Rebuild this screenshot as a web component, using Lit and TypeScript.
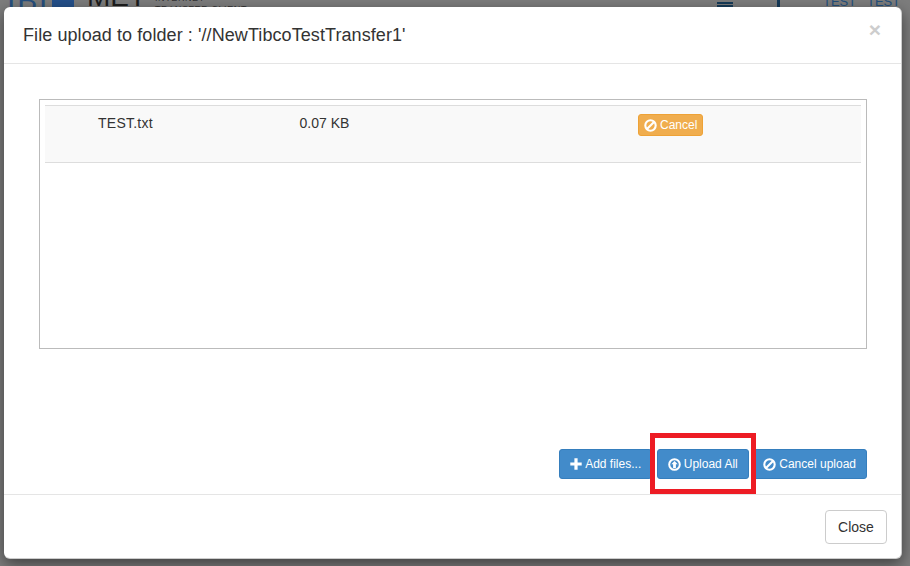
import { LitElement, html, css, svg } from "lit";
import { customElement } from "lit/decorators.js";

const ban = svg`<svg class="ic" viewBox="0 0 13 13" width="13" height="13"><circle cx="6.5" cy="6.5" r="5.2" fill="none" stroke="#fff" stroke-width="2.1"/><path d="M3 10 10 3" stroke="#fff" stroke-width="2.1"/></svg>`;
const plus = svg`<svg class="ic" viewBox="0 0 12 12" width="12" height="12"><path d="M4.4 .3h3.2v4.1h4.1v3.2H7.6v4.1H4.4V7.6H.3V4.4h4.1z" fill="#fff"/></svg>`;
const up = svg`<svg class="ic" viewBox="0 0 13 13" width="13" height="13"><circle cx="6.5" cy="6.5" r="5.3" fill="none" stroke="#fff" stroke-width="2"/><path d="M6.5 2.9 9.7 6.3H7.9V10H5.1V6.3H3.3z" fill="#fff"/></svg>`;

@customElement("app-root")
export class AppRoot extends LitElement {
  static styles = css`
    :host {
      display: block;
      position: relative;
      width: 910px;
      height: 566px;
      overflow: hidden;
      background: #7d7d7d;
      font-family: "Liberation Sans", Arial, sans-serif;
      color: #333;
    }
    .under {
      display: flex;
      align-items: flex-start;
      height: 8px;
      overflow: hidden;
    }
    .under > * { flex: none; display: block; white-space: nowrap; line-height: 1; }
    .ibi { margin: -14px 0 0 7px; width: 45px; font-size: 30px; letter-spacing: 2px; color: #264f7e; }
    .logo { width: 22px; height: 8px; background: #24508a; }
    .met { margin: -17px 0 0 13px; width: 68px; font-size: 28px; color: #1d1d1d; }
    .small { margin-top: -7px; width: 562px; font-size: 9px; line-height: 11px; color: #333; letter-spacing: 0.6px; }
    .small b { display: block; font-weight: 400; }
    .list { margin-top: 2px; width: 16px; height: 6px; background: repeating-linear-gradient(#163a58 0 2px, transparent 2px 3px); }
    .bar { margin-left: 44px; width: 3px; height: 8px; background: #163a58; }
    .tests { margin: -5px 0 0 43px; width: 44px; font-size: 13px; color: #23507e; }
    .tests.b { margin-left: 0; }
    .modal {
      position: absolute;
      left: 4px;
      top: 7px;
      width: 898px;
      height: 552px;
      box-sizing: border-box;
      display: flex;
      flex-direction: column;
      background: #fff;
      border: 1px solid rgba(0, 0, 0, 0.2);
      border-top: 0;
      border-left: 0;
      border-radius: 6px;
      box-shadow: 0 5px 15px rgba(0, 0, 0, 0.5);
    }
    header {
      display: flex;
      justify-content: space-between;
      box-sizing: border-box;
      height: 57px;
      padding: 15px 20px 0 19px;
      border-bottom: 1px solid #e5e5e5;
    }
    h4 { margin: 0; font-size: 18px; font-weight: 500; line-height: 26px; letter-spacing: 0.08px; color: #333; }
    .x { font-size: 21px; font-weight: 700; line-height: 15px; color: #cdcdcd; }
    .body {
      flex: 1;
      display: flex;
      flex-direction: column;
      padding: 35px 34px 15px 35px;
    }
    .panel {
      box-sizing: border-box;
      width: 828px;
      height: 250px;
      padding: 5px;
      border: 1px solid #bbb;
    }
    .row {
      box-sizing: border-box;
      height: 58px;
      display: flex;
      align-items: flex-start;
      background: #f9f9f9;
      border-top: 1px solid #ddd;
      border-bottom: 1px solid #ddd;
      font-size: 14px;
      line-height: 20px;
    }
    .name { margin: 7px 0 0 53px; width: 201.5px; letter-spacing: 0.25px; }
    .size { margin-top: 7px; width: 338.5px; }
    .warn {
      display: flex;
      align-items: center;
      gap: 3px;
      box-sizing: border-box;
      margin-top: 8px;
      height: 22px;
      width: 65px;
      padding: 0 5px;
      background: #f0ad4e;
      border: 1px solid #eea236;
      border-radius: 3px;
      color: #fff;
      font-size: 12px;
    }
    .actions {
      margin-top: auto;
      display: flex;
      justify-content: flex-end;
      gap: 3.5px;
    }
    .btn {
      display: flex;
      align-items: center;
      gap: 3px;
      box-sizing: border-box;
      height: 30px;
      padding: 0 10px;
      background: #428bca;
      border: 1px solid #357ebd;
      border-radius: 3px;
      color: #fff;
      font-size: 12px;
    }
    .btn.add { margin-right: 1px; }
    .ic { flex: none; }
    footer {
      flex: none;
      box-sizing: border-box;
      height: 64px;
      display: flex;
      justify-content: flex-end;
      padding: 15px 14px 0 0;
      border-top: 1px solid #e5e5e5;
    }
    .close {
      display: flex;
      align-items: center;
      justify-content: center;
      box-sizing: border-box;
      width: 62px;
      height: 34px;
      border: 1px solid #ccc;
      border-radius: 4px;
      font-size: 14px;
      color: #333;
      background: #fff;
    }
    .mark {
      position: absolute;
      left: 650px;
      top: 433px;
      width: 106px;
      height: 61px;
      box-sizing: border-box;
      border: 5px solid #ed1c24;
    }
  `;

  render() {
    return html`
      <div class="under">
        <span class="ibi">IBL</span>
        <span class="logo"></span>
        <span class="met">MET</span>
        <span class="small"><b>INTERNET</b><b>TRANSFER CLIENT</b></span>
        <span class="list"></span>
        <span class="bar"></span>
        <span class="tests">TEST</span>
        <span class="tests b">TEST_</span>
      </div>
      <section class="modal">
        <header>
          <h4>File upload to folder : '//NewTibcoTestTransfer1'</h4>
          <span class="x">×</span>
        </header>
        <div class="body">
          <div class="panel">
            <div class="row">
              <span class="name">TEST.txt</span>
              <span class="size">0.07 KB</span>
              <span class="warn">${ban}Cancel</span>
            </div>
          </div>
          <div class="actions">
            <span class="btn add">${plus}Add files...</span>
            <span class="btn">${up}Upload All</span>
            <span class="btn">${ban}Cancel upload</span>
          </div>
        </div>
        <footer><span class="close">Close</span></footer>
      </section>
      <div class="mark"></div>
    `;
  }
}
